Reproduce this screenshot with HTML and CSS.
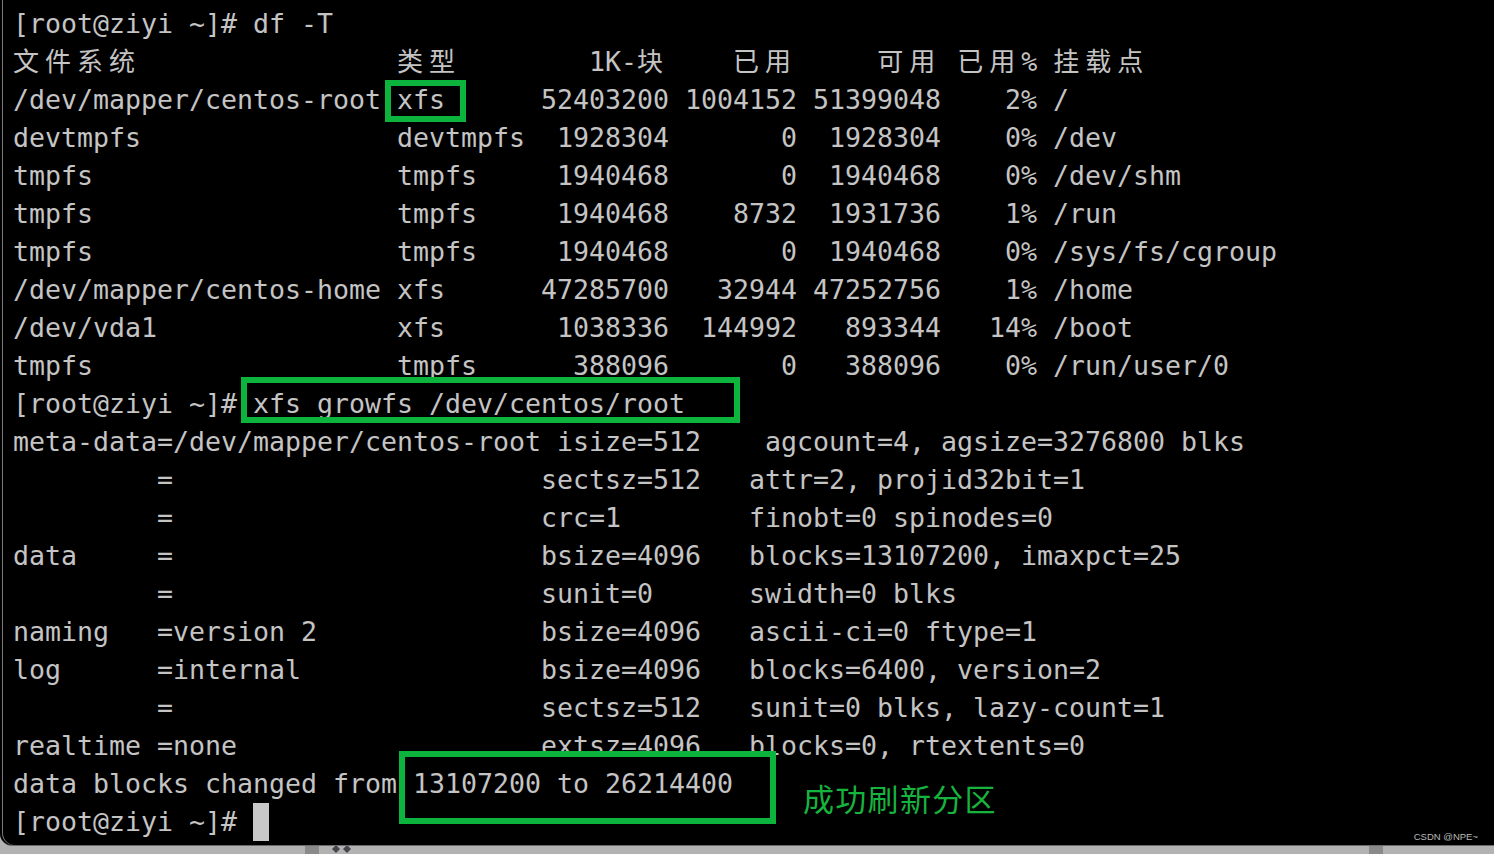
FILE: index.html
```html
<!DOCTYPE html>
<html lang="zh">
<head>
<meta charset="utf-8">
<title>df -T / xfs_growfs</title>
<link rel="stylesheet" href="styles.css">
</head>
<body>
<div class="screen">
  <div class="term">
<pre class="out">[root@ziyi ~]# df -T
<span class="c">文件系统</span>                <span class="c">类型</span>        1K-<span class="c">块</span>    <span class="c">已用</span>     <span class="c">可用</span> <span class="c">已用</span>% <span class="c">挂载点</span>
/dev/mapper/centos-root xfs      52403200 1004152 51399048    2% /
devtmpfs                devtmpfs  1928304       0  1928304    0% /dev
tmpfs                   tmpfs     1940468       0  1940468    0% /dev/shm
tmpfs                   tmpfs     1940468    8732  1931736    1% /run
tmpfs                   tmpfs     1940468       0  1940468    0% /sys/fs/cgroup
/dev/mapper/centos-home xfs      47285700   32944 47252756    1% /home
/dev/vda1               xfs       1038336  144992   893344   14% /boot
tmpfs                   tmpfs      388096       0   388096    0% /run/user/0
[root@ziyi ~]# xfs_growfs /dev/centos/root
meta-data=/dev/mapper/centos-root isize=512    agcount=4, agsize=3276800 blks
         =                       sectsz=512   attr=2, projid32bit=1
         =                       crc=1        finobt=0 spinodes=0
data     =                       bsize=4096   blocks=13107200, imaxpct=25
         =                       sunit=0      swidth=0 blks
naming   =version 2              bsize=4096   ascii-ci=0 ftype=1
log      =internal               bsize=4096   blocks=6400, version=2
         =                       sectsz=512   sunit=0 blks, lazy-count=1
realtime =none                   extsz=4096   blocks=0, rtextents=0
data blocks changed from 13107200 to 26214400
[root@ziyi ~]# <span class="cursor"> </span></pre>
    <div class="mark mark-type"></div>
    <div class="mark mark-cmd"></div>
    <div class="mark mark-result"></div>
    <div class="note">成功刷新分区</div>
    <div class="wm">CSDN @NPE~</div>
  </div>
  <div class="bar">
    <span class="thumb"></span>
    <svg class="arrows" width="24" height="9" viewBox="0 0 24 9"><path d="M5 0 L9 4 L5 8 L1 4 Z M16 0 L20 4 L16 8 L12 4 Z" fill="#45454d"/></svg>
    <span class="spacer"></span>
    <span class="thumb"></span>
  </div>
</div>
</body>
</html>
```
FILE: styles.css
```css
html, body {
  margin: 0;
  padding: 0;
}
body {
  background: #b4b4b4;
  width: 1494px;
  height: 854px;
  overflow: hidden;
}
.screen {
  display: flex;
  flex-direction: column;
  height: 854px;
}
.term {
  position: relative;
  height: 845px;
  flex: none;
  background: #000;
  border-bottom-left-radius: 12px;
  box-shadow: inset 2px 0 0 #000, inset 3px 0 0 #7a7a7a, 0 1px 0 #6a6a6a;
  overflow: hidden;
}
.out {
  margin: 0;
  padding: 5px 0 0 13px;
  font-family: "DejaVu Sans Mono", "Liberation Mono", monospace;
  font-size: 26.58px;
  line-height: 38px;
  color: #c4c4c4;
  white-space: pre;
}
.c {
  font-family: "Noto Sans CJK SC", "Noto Sans CJK JP", sans-serif;
  font-size: 26px;
  letter-spacing: 6px;
  line-height: 1;
}
.cursor {
  display: inline-block;
  width: 16px;
  height: 38px;
  vertical-align: top;
  background: #c8c8c8;
}
.mark {
  position: absolute;
  box-sizing: border-box;
  border: 6px solid #0cb33c;
}
.mark-type {
  left: 385px;
  top: 80px;
  width: 81px;
  height: 42px;
}
.mark-cmd {
  left: 241px;
  top: 377px;
  width: 499px;
  height: 46px;
}
.mark-result {
  left: 399px;
  top: 751px;
  width: 377px;
  height: 73px;
}
.note {
  position: absolute;
  left: 803px;
  top: 780px;
  font-family: "Noto Sans CJK SC", sans-serif;
  font-size: 31px;
  letter-spacing: 1.3px;
  line-height: 36px;
  color: #17b33f;
}
.wm {
  position: absolute;
  right: 16px;
  bottom: 3px;
  font-family: "Liberation Sans", Arial, sans-serif;
  font-size: 9.5px;
  line-height: 11px;
  color: #b9b9b9;
}
.bar {
  flex: 1;
  display: flex;
  align-items: stretch;
  padding-left: 305px;
  padding-right: 111px;
  background: #b2b2b2;
}
.thumb {
  width: 14px;
  background: #8a8a8a;
}
.arrows {
  margin-left: 12px;
  align-self: center;
}
.spacer {
  flex: 1;
}
```
